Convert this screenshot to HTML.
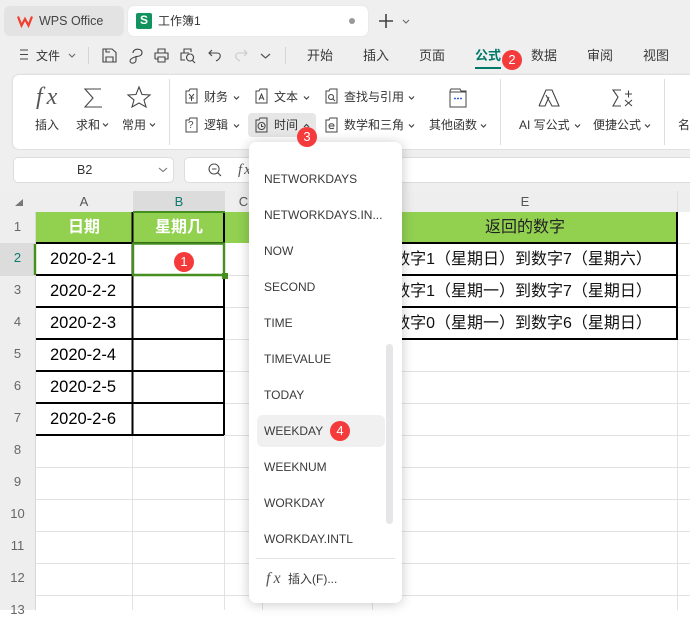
<!DOCTYPE html>
<html lang="zh"><head><meta charset="utf-8">
<style>
html,body{margin:0;padding:0}
body{width:690px;height:610px;overflow:hidden;position:relative;background:#fff;font-family:"Liberation Sans","Noto Sans CJK SC",sans-serif;color:#333}
.a{position:absolute;white-space:nowrap}
.t{position:absolute;white-space:nowrap;font-size:12px;line-height:16px;color:#333}
.m{position:absolute;white-space:nowrap;font-size:13px;line-height:18px;color:#3a3a3a;top:47px}
.b{position:absolute;width:20px;height:20px;border-radius:50%;background:#f53a3c;color:#fff;font-size:13px;line-height:20px;text-align:center;z-index:20}
.rh{position:absolute;left:0;width:35px;text-align:center;font-size:13px;line-height:30px;color:#666;height:32px}
.ch{position:absolute;top:191px;height:21px;line-height:22px;text-align:center;font-size:13px;color:#555}
.c{position:absolute;text-align:center;font-size:16.500px;color:#000;line-height:31px;height:31px}
.e{position:absolute;text-align:center;font-size:16px;line-height:31px;height:31px;left:371px;width:304px;z-index:3;color:#111}
.f{position:absolute;left:264px;font-size:12px;line-height:16px;color:#3a3a3a;white-space:nowrap;z-index:12}
svg{position:absolute;overflow:visible;fill:none;stroke:#444;stroke-width:1.1}
.fn{font-family:"Liberation Serif",serif;font-style:italic;color:#555;position:absolute;white-space:nowrap}
</style></head><body>
<div class="a" style="left:0;top:0;width:690px;height:150px;background:#efefef"></div>
<div class="a" style="left:4px;top:6px;width:120px;height:30px;background:#e3e3e3;border-radius:6px"></div>
<svg style="left:17px;top:15px" width="16" height="12" viewBox="0 0 16 12"><path d="M1 1.500L4.500 10.500L8 4L11.500 10.500L15 1.500" stroke="#f0402f" stroke-width="2.200"/></svg>
<div class="a" style="left:39px;top:12px;font-size:12.500px;line-height:18px;color:#444">WPS Office</div>
<div class="a" style="left:128px;top:6px;width:240px;height:30px;background:#fff;border-radius:6px;box-shadow:0 0 1px #ccc"></div>
<div class="a" style="left:136px;top:13px;width:16px;height:16px;background:#12925f;border-radius:2px;color:#fff;font-size:12px;font-weight:bold;line-height:15px;text-align:center">S</div>
<div class="a" style="left:158px;top:12px;font-size:12px;line-height:18px;color:#333">工作簿1</div>
<div class="a" style="left:349px;top:18px;width:6px;height:6px;border-radius:50%;background:#999"></div>
<svg style="left:379px;top:14px" width="14" height="14"><path d="M7 0V14M0 7H14" stroke="#444" stroke-width="1.600"/></svg>
<svg style="left:402px;top:19px" width="8" height="5"><path d="M1 1L4 4L7 1" stroke="#666"/></svg>

<svg style="left:20px;top:49px" width="8" height="11"><path d="M0 1H8M0 5.500H8M0 10H8"/></svg>
<div class="m" style="left:36px;color:#333;font-size:12px">文件</div>
<svg style="left:68px;top:53px" width="8" height="5"><path d="M1 1L4 4L7 1" stroke="#666"/></svg>
<div class="a" style="left:88px;top:47px;width:1px;height:17px;background:#d4d4d4"></div>
<svg style="left:102px;top:48px" width="15" height="15"><path d="M1 1H10L14 4.500V14H1ZM4 14V9H11V14M4 1V4H8"/></svg>
<svg style="left:129px;top:48px" width="14" height="15"><path d="M4 5C4 0 13 0 13 4.500C13 9 8 8 6 9C3 10 1 11 1 13C1 16 7 16 7 12V9"/></svg>
<svg style="left:154px;top:48px" width="15" height="15"><path d="M4 5V1H11V5M1 11V5H14V11H11M4 11H1M4 9H11V14H4Z"/></svg>
<svg style="left:180px;top:48px" width="17" height="16"><path d="M4 5V1H11V4M5 12H1V5H9M10 6A3.500 3.500 0 1 0 10.100 6M12 12L15 15"/></svg>
<svg style="left:208px;top:49px" width="14" height="13"><path d="M4 1L1 4L4 7M1 4H9C13 4 14 9 8 12"/></svg>
<svg style="left:234px;top:49px" width="14" height="13"><path d="M10 1L13 4L10 7M13 4H5C1 4 0 9 6 12" stroke="#c9c9c9"/></svg>
<svg style="left:260px;top:53px" width="11" height="6"><path d="M1 1L5.500 5L10 1" stroke="#555" stroke-width="1.200"/></svg>
<div class="a" style="left:285px;top:47px;width:1px;height:17px;background:#d4d4d4"></div>
<div class="m" style="left:307px">开始</div>
<div class="m" style="left:363px">插入</div>
<div class="m" style="left:419px">页面</div>
<div class="m" style="left:475px;color:#00786a;font-weight:bold">公式</div>
<div class="a" style="left:475px;top:67px;width:26px;height:2px;background:#00786a"></div>
<div class="m" style="left:531px">数据</div>
<div class="m" style="left:587px">审阅</div>
<div class="m" style="left:643px">视图</div>

<div class="a" style="left:13px;top:75px;width:690px;height:74px;background:#fff;border-radius:6px;box-shadow:0 0 2px #c4c4c4"></div>
<div class="fn" style="left:36px;top:84px;font-size:24px;line-height:26px;letter-spacing:4px">fx</div>
<svg style="left:84px;top:88px" width="18" height="20"><path d="M17 1H1L9 10L1 19H18"/></svg>
<svg style="left:127px;top:86px" width="24" height="22"><path d="M12 1L15 8.500L23 9L17 14L19 21L12 17L5 21L7 14L1 9L9 8.500Z"/></svg>
<div class="t" style="left:35px;top:117px">插入</div>
<div class="t" style="left:76px;top:117px">求和</div>
<svg style="left:102px;top:123px" width="7" height="4"><path d="M1 .5L3.500 3L6 .5" stroke-width="1.200"/></svg>
<div class="t" style="left:122px;top:117px">常用</div>
<svg style="left:149px;top:123px" width="7" height="4"><path d="M1 .5L3.500 3L6 .5" stroke-width="1.200"/></svg>
<div class="a" style="left:169px;top:79px;width:1px;height:66px;background:#ddd"></div>

<div class="a" style="left:248px;top:113px;width:68px;height:24px;background:#e6e6e6;border-radius:4px"></div>
<svg style="left:185px;top:88px" width="13" height="16"><path d="M1 3V15H12V1H5L4 3ZM4 6L6.500 9L9 6M4 10H9M6.500 9V13" stroke-width="1"/></svg>
<div class="t" style="left:204px;top:89px">财务</div>
<svg style="left:233px;top:96px" width="7" height="4"><path d="M1 .5L3.500 3L6 .5" stroke-width="1.200"/></svg>
<svg style="left:255px;top:88px" width="13" height="16"><path d="M1 3V15H12V1H5L4 3ZM4 12L6.500 6L9 12M5 10H8" stroke-width="1"/></svg>
<div class="t" style="left:274px;top:89px">文本</div>
<svg style="left:303px;top:96px" width="7" height="4"><path d="M1 .5L3.500 3L6 .5" stroke-width="1.200"/></svg>
<svg style="left:325px;top:88px" width="13" height="16"><path d="M1 3V15H12V1H5L4 3ZM6 6.500A2.500 2.500 0 1 0 6.100 6.500M8 11L10 13" stroke-width="1"/></svg>
<div class="t" style="left:344px;top:89px">查找与引用</div>
<svg style="left:408px;top:96px" width="7" height="4"><path d="M1 .5L3.500 3L6 .5" stroke-width="1.200"/></svg>
<svg style="left:185px;top:117px" width="13" height="16"><path d="M1 3V15H12V1H5L4 3Z" stroke-width="1"/></svg>
<div class="a" style="left:188px;top:120px;font-size:10px;line-height:12px;color:#444">?</div>
<div class="t" style="left:204px;top:117px">逻辑</div>
<svg style="left:233px;top:124px" width="7" height="4"><path d="M1 .5L3.500 3L6 .5" stroke-width="1.200"/></svg>
<svg style="left:255px;top:117px" width="13" height="16"><path d="M1 3V15H12V1H5L4 3ZM6.500 5.500A3.500 3.500 0 1 0 6.600 5.500M6.500 7V9.500H8.500" stroke-width="1"/></svg>
<div class="t" style="left:274px;top:117px">时间</div>
<svg style="left:303px;top:124px" width="7" height="4"><path d="M1 3L3.500 .5L6 3" stroke-width="1.200"/></svg>
<svg style="left:325px;top:117px" width="13" height="16"><path d="M1 3V15H12V1H5L4 3ZM4 9H9C9 6 4 6 4 9C4 12 7 12 9 11" stroke-width="1"/></svg>
<div class="t" style="left:344px;top:117px">数学和三角</div>
<svg style="left:408px;top:124px" width="7" height="4"><path d="M1 .5L3.500 3L6 .5" stroke-width="1.200"/></svg>
<svg style="left:449px;top:88px" width="18" height="20"><path d="M1 3V19H17V3H12L11 1H2ZM1 4H17" stroke-width="1"/><path d="M5 10.500H7M8 10.500H10M11 10.500H13" stroke="#3c63d8" stroke-width="1.500"/></svg>
<div class="t" style="left:429px;top:117px">其他函数</div>
<svg style="left:480px;top:124px" width="7" height="4"><path d="M1 .5L3.500 3L6 .5" stroke-width="1.200"/></svg>
<div class="a" style="left:500px;top:79px;width:1px;height:66px;background:#ddd"></div>
<svg style="left:538px;top:89px" width="22" height="18"><path d="M1 17L8 1H14L21 17H14L8 6M1 17H7L11 8"/></svg>
<div class="t" style="left:519px;top:117px">AI 写公式</div>
<svg style="left:574px;top:124px" width="7" height="4"><path d="M1 .5L3.500 3L6 .5" stroke-width="1.200"/></svg>
<svg style="left:612px;top:89px" width="21" height="18"><path d="M9 1H1L6 8L1 17H9M13 5H20M16.500 1.500V8.500M13 11L20 17M20 11L13 17"/></svg>
<div class="t" style="left:593px;top:117px">便捷公式</div>
<svg style="left:644px;top:124px" width="7" height="4"><path d="M1 .5L3.500 3L6 .5" stroke-width="1.200"/></svg>
<div class="a" style="left:664px;top:79px;width:1px;height:66px;background:#ddd"></div>
<div class="t" style="left:678px;top:117px">名</div>

<div class="a" style="left:0;top:150px;width:690px;height:41px;background:#efefef"></div>
<div class="a" style="left:13px;top:157px;width:159px;height:24px;background:#fff;border:1px solid #ddd;border-radius:5px"></div>
<div class="a" style="left:77px;top:162px;font-size:12.500px;line-height:17px;color:#333">B2</div>
<svg style="left:158px;top:167px" width="10" height="6"><path d="M1 1L5 4.500L9 1" stroke="#777"/></svg>
<div class="a" style="left:184px;top:157px;width:520px;height:24px;background:#fff;border:1px solid #ddd;border-radius:5px"></div>
<svg style="left:208px;top:163px" width="14" height="14"><path d="M6 1A5 5 0 1 0 6.100 1M4 6H8.500M9.500 9.500L13 13"/></svg>
<div class="fn" style="left:238px;top:160px;font-size:15px;line-height:20px;letter-spacing:2px">fx</div>

<div class="a" style="left:0;top:191px;width:690px;height:21px;background:#eee"></div>
<div class="a" style="left:0;top:212px;width:35px;height:398px;background:#eee"></div>
<div class="a" style="left:35px;top:212px;width:1px;height:398px;background:#d8d8d8"></div>
<svg style="left:15px;top:199px" width="8" height="7"><path d="M0 7H8V0Z" fill="#777" stroke="none"/></svg>
<div class="a" style="left:133px;top:191px;width:92px;height:21px;background:#dcdcdc"></div>
<div class="a" style="left:0;top:243px;width:35px;height:33px;background:#dcdcdc"></div>
<div class="ch" style="left:36px;width:96px">A</div>
<div class="ch" style="left:133px;width:92px;color:#0c7a70">B</div>
<div class="ch" style="left:225px;width:37px">C</div>
<div class="ch" style="left:373px;width:304px">E</div>
<div class="a" style="left:677px;top:191px;width:1px;height:21px;background:#ddd"></div>

<div class="rh" style="top:212px;line-height:29px">1</div>
<div class="rh" style="top:243px;color:#0c7a70">2</div>
<div class="rh" style="top:275px">3</div>
<div class="rh" style="top:307px">4</div>
<div class="rh" style="top:339px">5</div>
<div class="rh" style="top:371px">6</div>
<div class="rh" style="top:403px">7</div>
<div class="rh" style="top:435px">8</div>
<div class="rh" style="top:467px">9</div>
<div class="rh" style="top:499px">10</div>
<div class="rh" style="top:531px">11</div>
<div class="rh" style="top:563px">12</div>
<div class="rh" style="top:595px">13</div>

<svg style="left:0;top:0;z-index:1" width="690" height="610"><path d="M36 371.500H690M36 403.500H690M36 435.500H690M36 467.500H690M36 499.500H690M36 531.500H690M36 563.500H690M36 595.500H690M224.500 212V610M262.500 340V610M372.500 340V610M677.500 212V610M132.500 436V610M677 243.500H690M677 275.500H690M677 307.500H690M677 339.500H690M225 275.500H373M225 307.500H373M225 339.500H373M262.500 244V340M372.500 244V340" stroke="#e2e2e2" stroke-width="1"/></svg>

<div class="a" style="left:36px;top:212px;width:641px;height:31px;background:#92d050;z-index:2"></div>
<div class="c" style="left:36px;top:212px;width:96px;font-size:16px;color:#fff;z-index:3;font-weight:bold">日期</div>
<div class="c" style="left:133px;top:212px;width:92px;font-size:16px;color:#fff;z-index:3;font-weight:bold">星期几</div>
<div class="c" style="left:373px;top:212px;width:304px;font-size:16px;z-index:3;color:#222">返回的数字</div>
<div class="c" style="left:35px;top:244px;width:96px;z-index:3">2020-2-1</div>
<div class="c" style="left:35px;top:276px;width:96px;z-index:3">2020-2-2</div>
<div class="c" style="left:35px;top:308px;width:96px;z-index:3">2020-2-3</div>
<div class="c" style="left:35px;top:340px;width:96px;z-index:3">2020-2-4</div>
<div class="c" style="left:35px;top:372px;width:96px;z-index:3">2020-2-5</div>
<div class="c" style="left:35px;top:404px;width:96px;z-index:3">2020-2-6</div>
<div class="e" style="top:244px">数字1（星期日）到数字7（星期六）</div>
<div class="e" style="top:276px">数字1（星期一）到数字7（星期日）</div>
<div class="e" style="top:308px">数字0（星期一）到数字6（星期日）</div>

<svg style="left:0;top:0;z-index:4" width="690" height="610"><path d="M36 243H224M36 275H224M36 307H224M36 339H224M36 371H224M36 403H224M36 435H224M132.500 212V435M224 212V435" stroke="#000" stroke-width="2"/><path d="M373 243H678M373 275H678M373 307H678M373 339H678M677 212V340" stroke="#000" stroke-width="2"/><path d="M133 243.500H224V275H133ZM35 244V275" stroke="#458f21" stroke-width="2.400"/><path d="M133 212H225" stroke="#458f21" stroke-width="2"/></svg>
<div class="a" style="left:222px;top:273px;width:6px;height:6px;background:#458f21;z-index:5"></div>

<div class="a" style="left:249px;top:142px;width:153px;height:461px;background:#fff;border-radius:7px;box-shadow:0 1px 12px rgba(0,0,0,.22);z-index:10"></div>
<div class="a" style="left:257px;top:415px;width:128px;height:32px;background:#f0f0f0;border-radius:6px;z-index:11"></div>
<div class="a" style="left:386px;top:344px;width:7px;height:180px;background:#e6e6e8;border-radius:4px;z-index:11"></div>
<div class="f" style="top:171px">NETWORKDAYS</div>
<div class="f" style="top:207px">NETWORKDAYS.IN...</div>
<div class="f" style="top:243px">NOW</div>
<div class="f" style="top:279px">SECOND</div>
<div class="f" style="top:315px">TIME</div>
<div class="f" style="top:351px">TIMEVALUE</div>
<div class="f" style="top:387px">TODAY</div>
<div class="f" style="top:423px">WEEKDAY</div>
<div class="f" style="top:459px">WEEKNUM</div>
<div class="f" style="top:495px">WORKDAY</div>
<div class="f" style="top:531px">WORKDAY.INTL</div>
<div class="a" style="left:256px;top:558px;width:139px;height:1px;background:#e2e2e2;z-index:11"></div>
<div class="fn" style="left:266px;top:569px;font-size:16px;line-height:20px;letter-spacing:3px;z-index:12">fx</div>
<div class="f" style="left:288px;top:571px">插入(F)...</div>

<div class="b" style="left:174px;top:252px">1</div>
<div class="b" style="left:502px;top:50px">2</div>
<div class="b" style="left:297px;top:127px">3</div>
<div class="b" style="left:330px;top:421px">4</div>
</body></html>
